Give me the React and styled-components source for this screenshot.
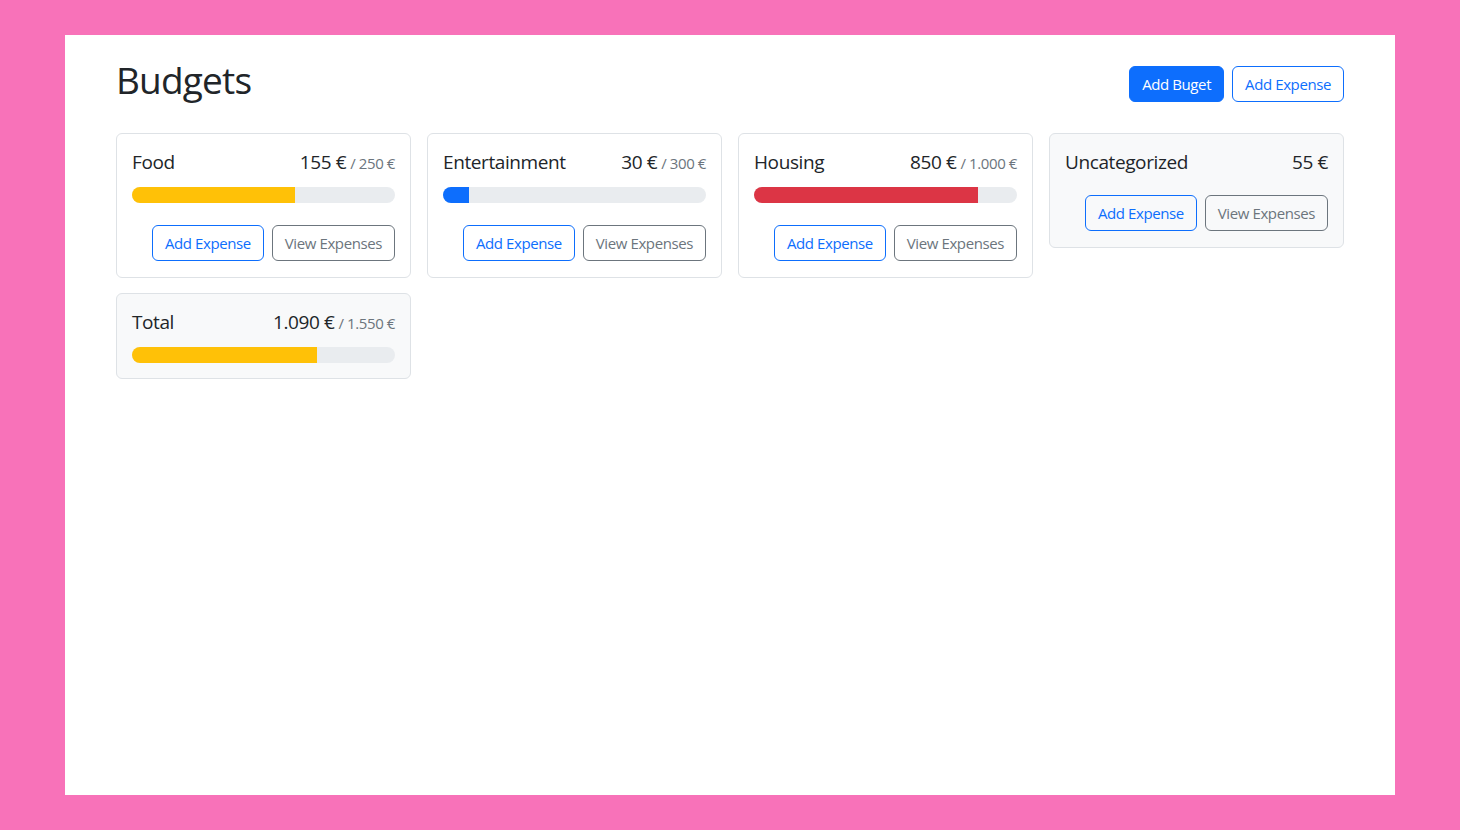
import React from "react";
import styled, { createGlobalStyle } from "styled-components";

const GlobalStyle = createGlobalStyle`
  html, body {
    margin: 0;
    padding: 0;
    background: #f872b9;
  }
  body {
    font-family: "Open Sans", "Noto Sans", sans-serif;
    color: #212529;
  }
  * {
    box-sizing: border-box;
  }
`;

const Page = styled.div`
  padding: 35px 65px;
  min-height: 830px;
`;

const Panel = styled.main`
  background: #ffffff;
  height: 760px;
  padding: 21px 51px 0;
`;

const Toolbar = styled.div`
  display: flex;
  align-items: center;
  gap: 8px;
  margin-bottom: 21px;
`;

const Heading = styled.h1`
  margin: 0 auto 8px 0;
  font-size: 37px;
  font-weight: 400;
  line-height: 48px;
  letter-spacing: -0.8px;
`;

const Button = styled.button`
  font-family: inherit;
  font-size: 15px;
  letter-spacing: -0.4px;
  line-height: 22px;
  height: 36px;
  padding: 6px 12px;
  border-radius: 6px;
  cursor: pointer;
  border: 1px solid ${(p) => (p.$variant === "secondary" ? "#6c757d" : "#0d6efd")};
  color: ${(p) =>
    p.$variant === "primary" ? "#ffffff" : p.$variant === "secondary" ? "#6c757d" : "#0d6efd"};
  background: ${(p) => (p.$variant === "primary" ? "#0d6efd" : "transparent")};
`;

const Grid = styled.div`
  display: grid;
  grid-template-columns: repeat(4, 1fr);
  column-gap: 16px;
  row-gap: 15px;
  align-items: start;
`;

const Card = styled.div`
  border: 1px solid #dee2e6;
  border-radius: 6px;
  background: ${(p) => (p.$light ? "#f8f9fa" : "#ffffff")};
  padding: 16px 15px ${(p) => (p.$short ? "15px" : "16px")};
`;

const TitleRow = styled.div`
  display: flex;
  justify-content: space-between;
  align-items: baseline;
  font-size: 19px;
  letter-spacing: -0.4px;
  line-height: 24px;
  margin-bottom: ${(p) => (p.$tight ? "21px" : "12px")};
`;

const Amount = styled.div`
  white-space: nowrap;
`;

const Max = styled.span`
  color: #6c757d;
  font-size: 15px;
  margin-left: 4px;
`;

const Track = styled.div`
  height: 16px;
  border-radius: 999px;
  background: #e9ecef;
  overflow: hidden;
  display: flex;
`;

const Fill = styled.div`
  height: 100%;
  background: ${(p) => p.$color};
`;

const Actions = styled.div`
  display: flex;
  justify-content: flex-end;
  gap: 8px;
  margin-top: ${(p) => (p.$tight ? "0" : "22px")};
`;

const formatter = new Intl.NumberFormat("de-DE", {
  style: "currency",
  currency: "EUR",
  minimumFractionDigits: 0,
  maximumFractionDigits: 0,
});

const fmt = (n) => formatter.format(n).replace(/\u00a0/g, " ");

const barColor = (amount, max) => {
  const ratio = amount / max;
  if (ratio < 0.5) return "#0d6efd";
  if (ratio < 0.75) return "#ffc107";
  return "#dc3545";
};

const budgets = [
  { id: 1, name: "Food", amount: 155, max: 250 },
  { id: 2, name: "Entertainment", amount: 30, max: 300 },
  { id: 3, name: "Housing", amount: 850, max: 1000 },
];

const BudgetCard = ({ name, amount, max, light, hideButtons }) => (
  <Card $light={light} $short={hideButtons}>
    <TitleRow $tight={!max}>
      <div>{name}</div>
      <Amount>
        {fmt(amount)}
        {max && <Max>/ {fmt(max)}</Max>}
      </Amount>
    </TitleRow>
    {max && (
      <Track>
        <Fill
          $color={barColor(amount, max)}
          style={{ width: `${Math.min(100, (amount / max) * 100)}%` }}
        />
      </Track>
    )}
    {!hideButtons && (
      <Actions $tight={!max}>
        <Button $variant="outline">Add Expense</Button>
        <Button $variant="secondary">View Expenses</Button>
      </Actions>
    )}
  </Card>
);

export default function App() {
  const total = budgets.reduce((s, b) => s + b.amount, 0) + 55;
  const totalMax = budgets.reduce((s, b) => s + b.max, 0);
  return (
    <>
      <GlobalStyle />
      <Page>
        <Panel>
          <Toolbar>
            <Heading>Budgets</Heading>
            <Button $variant="primary">Add Buget</Button>
            <Button $variant="outline">Add Expense</Button>
          </Toolbar>
          <Grid>
            {budgets.map((b) => (
              <BudgetCard key={b.id} name={b.name} amount={b.amount} max={b.max} />
            ))}
            <BudgetCard name="Uncategorized" amount={55} light />
            <BudgetCard name="Total" amount={total} max={totalMax} light hideButtons />
          </Grid>
        </Panel>
      </Page>
    </>
  );
}
